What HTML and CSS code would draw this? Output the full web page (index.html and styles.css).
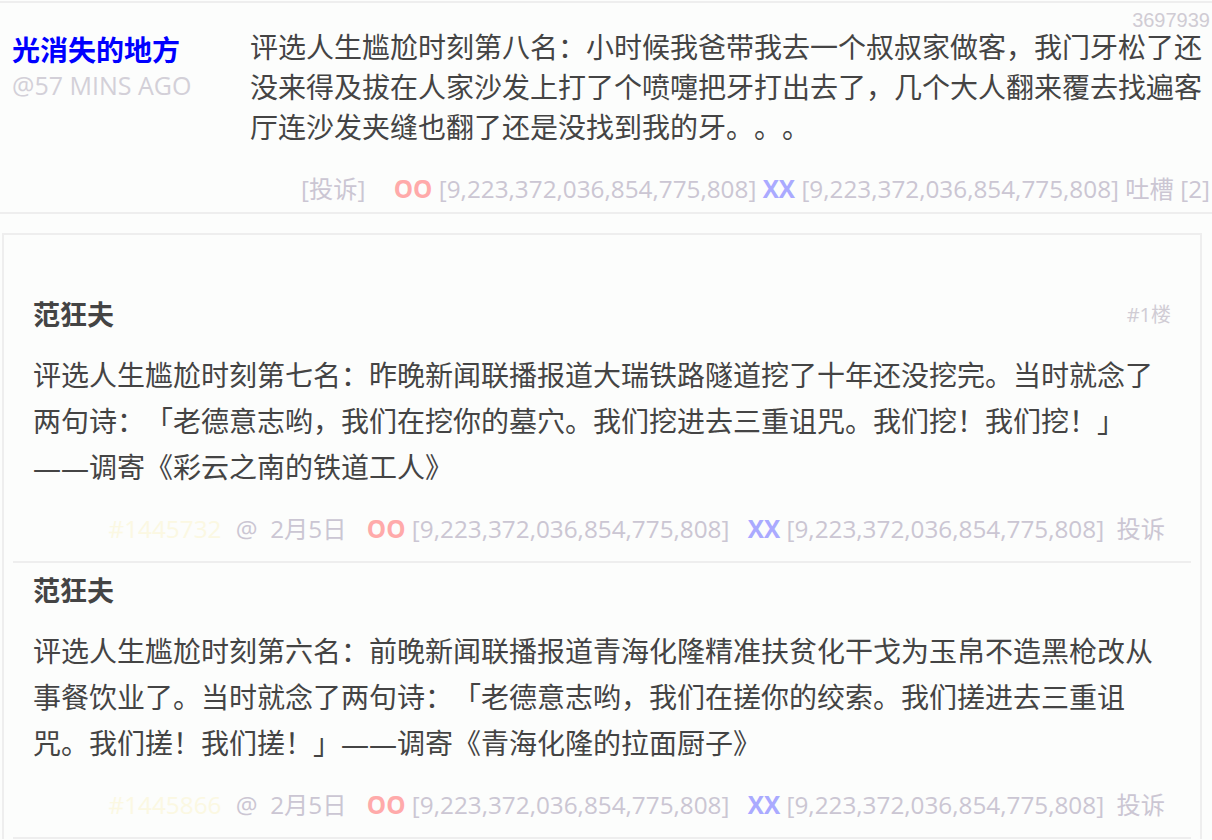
FILE: index.html
```html
<!DOCTYPE html>
<html>
<head>
<meta charset="utf-8">
<link rel="stylesheet" href="styles.css">
</head>
<body>
<div class="post">
  <div class="post-id">3697939</div>
  <div class="post-row">
    <div class="post-author">
      <div class="author-name">光消失的地方</div>
      <div class="author-time">@57 MINS AGO</div>
    </div>
    <div class="post-text">评选人生尴尬时刻第八名：小时候我爸带我去一个叔叔家做客，我门牙松了还没来得及拔在人家沙发上打了个喷嚏把牙打出去了，几个大人翻来覆去找遍客厅连沙发夹缝也翻了还是没找到我的牙。。。</div>
  </div>
  <div class="post-meta">
    <span class="report">[投诉]</span>
    <span class="oo">OO</span> <span class="num">[9,223,372,036,854,775,808]</span>
    <span class="xx">XX</span> <span class="num">[9,223,372,036,854,775,808]</span>
    <span class="num">吐槽 [2]</span>
  </div>
</div>

<div class="card">
  <div class="comment first">
    <div class="comment-head">
      <span class="comment-name">范狂夫</span>
      <span class="floor">#1楼</span>
    </div>
    <div class="comment-text">评选人生尴尬时刻第七名：昨晚新闻联播报道大瑞铁路隧道挖了十年还没挖完。当时就念了两句诗：「老德意志哟，我们在挖你的墓穴。我们挖进去三重诅咒。我们挖！我们挖！」——调寄《彩云之南的铁道工人》</div>
    <div class="comment-meta">
      <span class="cid">#1445732</span>
      <span class="date">@ &nbsp;2月5日</span>
      <span class="oo">OO</span> <span class="num">[9,223,372,036,854,775,808]</span>
      <span class="xx">XX</span> <span class="num">[9,223,372,036,854,775,808]</span>
      <span class="report-link">投诉</span>
    </div>
  </div>
  <div class="comment">
    <div class="comment-head">
      <span class="comment-name">范狂夫</span>
    </div>
    <div class="comment-text">评选人生尴尬时刻第六名：前晚新闻联播报道青海化隆精准扶贫化干戈为玉帛不造黑枪改从事餐饮业了。当时就念了两句诗：「老德意志哟，我们在搓你的绞索。我们搓进去三重诅咒。我们搓！我们搓！」——调寄《青海化隆的拉面厨子》</div>
    <div class="comment-meta">
      <span class="cid">#1445866</span>
      <span class="date">@ &nbsp;2月5日</span>
      <span class="oo">OO</span> <span class="num">[9,223,372,036,854,775,808]</span>
      <span class="xx">XX</span> <span class="num">[9,223,372,036,854,775,808]</span>
      <span class="report-link">投诉</span>
    </div>
  </div>
</div>
</body>
</html>
```

FILE: styles.css
```css
html, body {
  margin: 0;
  padding: 0;
  background: #fcfdfc;
}
body {
  font-family: "Open Sans", "Noto Sans CJK SC", sans-serif;
  color: #444;
  width: 1212px;
  overflow: hidden;
  text-spacing-trim: space-all;
}
.post {
  border-top: 2px solid #eeeeee;
  border-bottom: 2px solid #eeeeee;
  margin-top: 1px;
  padding-bottom: 8px;
}
.post-id {
  font-family: "Liberation Sans", sans-serif;
  text-align: right;
  font-size: 20px;
  line-height: 16px;
  height: 16px;
  color: #d0ccd4;
  padding-right: 2px;
  margin-top: 9px;
}
.post-row {
  display: flex;
  padding-left: 12px;
}
.post-author {
  width: 238px;
  flex: none;
  padding-top: 5px;
}
.author-name {
  font-size: 28px;
  font-weight: bold;
  color: #0000ff;
  line-height: 34px;
}
.author-time {
  font-size: 25px;
  color: #d3d0d8;
  line-height: 32px;
  margin-top: 2px;
}
.post-text {
  font-family: "Liberation Sans", "Noto Sans CJK SC", sans-serif;
  font-size: 28px;
  line-height: 40px;
  color: #444;
  padding-right: 6px;
  padding-top: 1px;
}
.post-meta {
  text-align: right;
  font-size: 24.3px;
  line-height: 30px;
  margin-top: 25px;
  padding-right: 2px;
  color: #cbc6d3;
}
.report {
  margin-right: 22px;
}
.oo {
  color: #ffaaaa;
  font-weight: bold;
}
.xx {
  color: #aaaaff;
  font-weight: bold;
}
.num {
  color: #cbc6d3;
}
.card {
  margin: 19px 10px 0 2px;
  border: 2px solid #eeeeee;
  border-bottom: none;
  padding: 0 9px;
}
.comment {
  border-bottom: 2px solid #eeeeee;
  padding: 10px 20px 17px 20px;
}
.comment.first {
  padding-top: 62px;
}
.comment-head {
  display: flex;
  justify-content: space-between;
  align-items: center;
  line-height: 36px;
}
.comment-name {
  font-size: 27px;
  font-weight: bold;
  color: #444;
}
.floor {
  font-size: 20px;
  color: #d0ccd4;
}
.comment-text {
  font-size: 28px;
  line-height: 46px;
  margin-top: 19px;
  color: #444;
}
.comment-meta {
  text-align: right;
  font-size: 24.3px;
  line-height: 30px;
  margin-top: 24px;
  padding-right: 6px;
  color: #cbc6d3;
}
.comment-meta .cid {
  color: #fbf8e2;
  margin-right: 8px;
}
.comment-meta .date {
  margin-right: 14px;
}
.comment-meta .xx {
  margin-left: 12px;
}
.comment-meta .report-link {
  margin-left: 6px;
  color: #cbc6d3;
}
```
